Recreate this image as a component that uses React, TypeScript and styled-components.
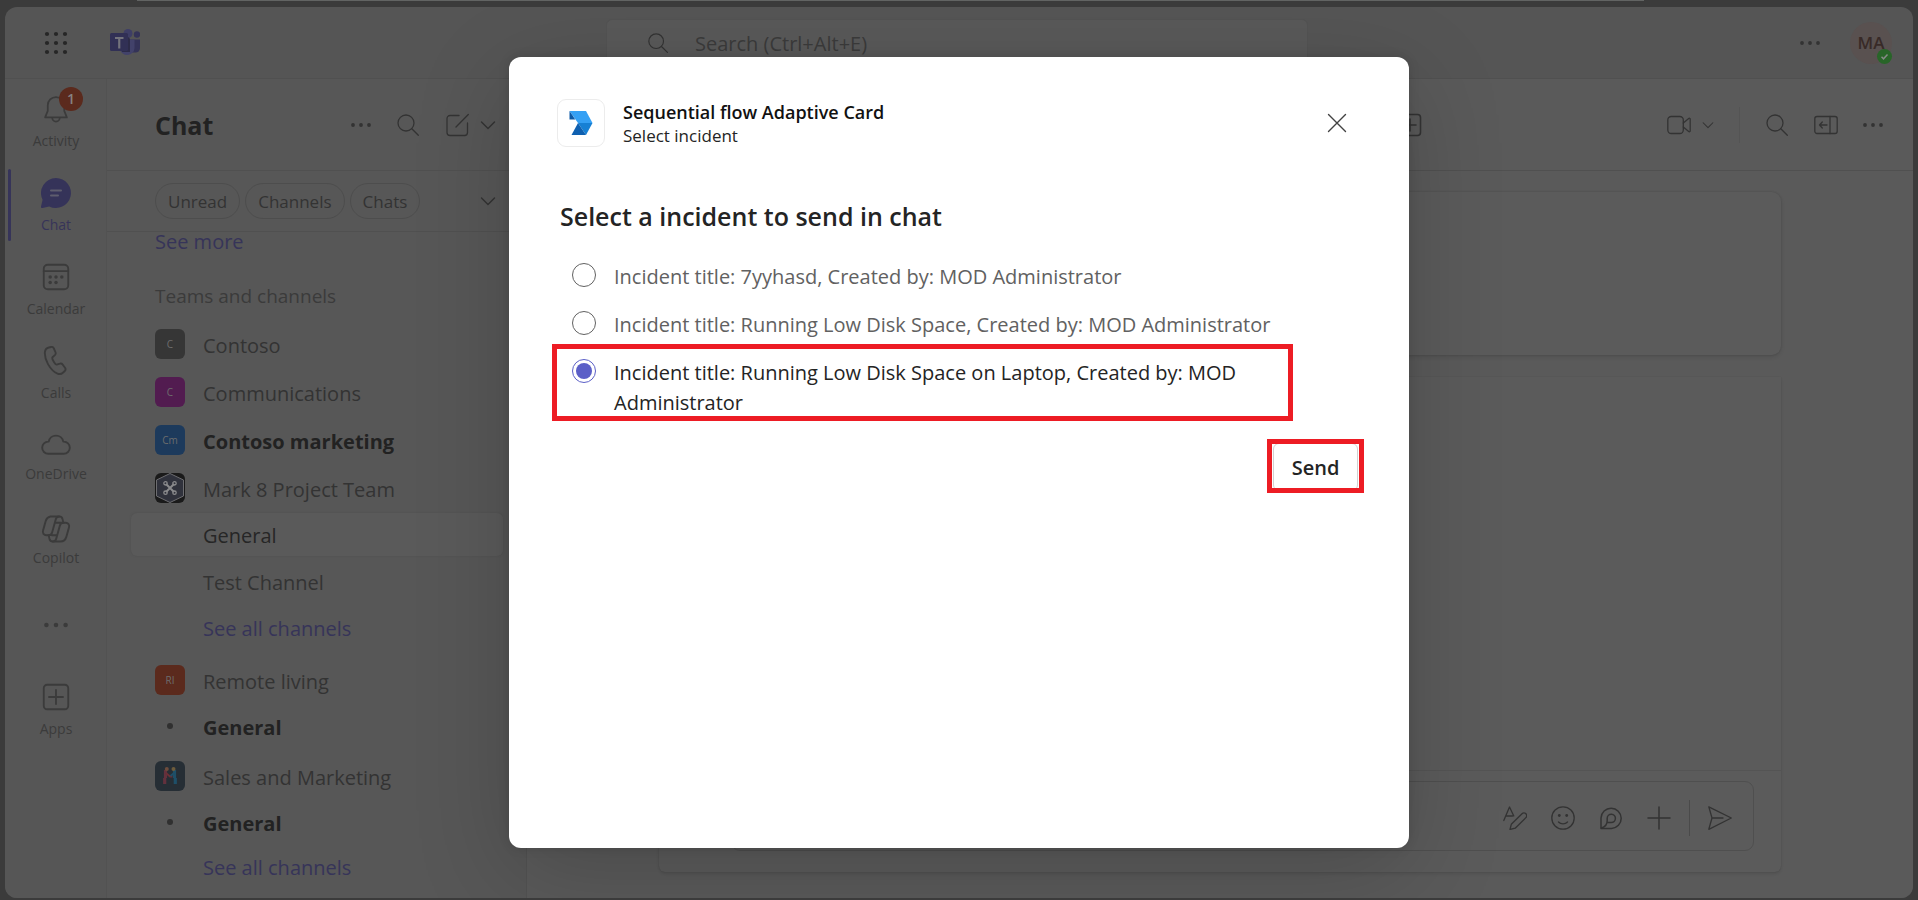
import React, { useState } from "react";
import styled, { createGlobalStyle, css } from "styled-components";

const c = {
  frame: "#3b3b3b",
  header: "#555555",
  rail: "#565656",
  list: "#575757",
  surface: "#5a5a5a",
  line: "#505050",
  faintLine: "#525252",
  strong: "#222222",
  text: "#333333",
  muted: "#3b3b3b",
  brand: "#363459",
};

const GlobalStyle = createGlobalStyle`
  * { box-sizing: border-box; }
  body {
    margin: 0;
    background: ${c.frame};
    font-family: "Open Sans", "Noto Sans", sans-serif;
    color: ${c.text};
  }
  button {
    font: inherit;
    color: inherit;
    background: none;
    border: 0;
    padding: 0;
    cursor: pointer;
  }
  a { text-decoration: none; }
  svg { display: block; }
`;

const Page = styled.div`
  height: 100vh;
  min-height: 880px;
  display: flex;
  flex-direction: column;
  padding: 0 5px 2px;
`;

const TitleStrip = styled.div`
  flex: none;
  height: 1px;
  width: 79%;
  margin: 0 0 6px 132px;
  background: #626463;
`;

const Window = styled.div`
  position: relative;
  flex: 1;
  min-height: 0;
  display: flex;
  flex-direction: column;
  border-radius: 12px;
  overflow: hidden;
  background: ${c.header};
`;

const Header = styled.header`
  flex: none;
  height: 72px;
  display: flex;
  align-items: center;
  border-bottom: 1px solid ${c.line};
`;

const HeaderSide = styled.div<{ $end?: boolean }>`
  flex: 1;
  display: flex;
  align-items: center;
  gap: 42px;
  padding: 0 21px 0 39px;
  ${(p) => p.$end && "justify-content: flex-end; gap: 30px;"}
`;

const SearchBox = styled.label`
  flex: 0 1 702px;
  height: 48px;
  display: flex;
  align-items: center;
  gap: 26px;
  margin-right: 4px;
  padding: 0 40px;
  border-radius: 6px;
  border: 1px solid #535353;
  background: #595959;
`;

const SearchInput = styled.input`
  flex: 1;
  min-width: 0;
  border: 0;
  padding: 2px 0 0;
  outline: 0;
  background: transparent;
  font: 20px/28px "Open Sans", "Noto Sans", sans-serif;
  color: ${c.text};
  &::placeholder { color: ${c.muted}; opacity: 1; }
`;

const Avatar = styled.button`
  position: relative;
  width: 42px;
  height: 42px;
  border-radius: 50%;
  background: #595150;
  color: #382a27;
  font-size: 17px;
  font-weight: 600;
`;

const Presence = styled.span`
  position: absolute;
  right: 0;
  bottom: 0;
  width: 15px;
  height: 15px;
  border-radius: 50%;
  background: #286528;
  display: grid;
  place-items: center;
`;

const Body = styled.div`
  flex: 1;
  min-height: 0;
  display: flex;
`;

const Rail = styled.nav`
  flex: none;
  width: 102px;
  padding-left: 1px;
  border-right: 1px solid ${c.faintLine};
  background: ${c.rail};
`;

const RailItem = styled.button<{ $active?: boolean; $tight?: boolean }>`
  position: relative;
  width: 100%;
  height: 84px;
  display: flex;
  flex-direction: column;
  align-items: center;
  gap: ${(p) => (p.$tight ? 4 : 7)}px;
  padding-top: 15px;
  font-size: 14px;
  line-height: 20px;
  color: ${(p) => (p.$active ? c.brand : c.muted)};
  ${(p) =>
    p.$active &&
    css`
      &::before {
        content: "";
        position: absolute;
        left: 2px;
        top: 6px;
        width: 3px;
        height: 72px;
        border-radius: 2px;
        background: ${c.brand};
      }
    `}
`;

const RailGlyph = styled.span`
  height: 30px;
  display: grid;
  place-items: center;
`;

const RailMore = styled(RailItem)`
  justify-content: center;
  padding-top: 0;
`;

const Count = styled.span`
  position: absolute;
  left: 53px;
  top: 8px;
  width: 24px;
  height: 24px;
  border-radius: 50%;
  background: #5b2a1d;
  color: #868281;
  font-weight: 600;
  line-height: 24px;
  text-align: center;
`;

const ListPane = styled.aside`
  flex: none;
  width: 420px;
  display: flex;
  flex-direction: column;
  border-right: 1px solid ${c.faintLine};
  background: ${c.list};
`;

const ListHeader = styled.div`
  flex: none;
  height: 92px;
  display: flex;
  align-items: center;
  padding: 0 30px 0 48px;
  border-bottom: 1px solid ${c.line};
`;

const ListTitle = styled.h1`
  flex: 1;
  margin: 0;
  font-size: 25px;
  line-height: 36px;
  color: ${c.strong};
`;

const ListActions = styled.div`
  display: flex;
  align-items: center;
  gap: 25px;
`;

const SplitButton = styled.div`
  display: flex;
  align-items: center;
  gap: 11px;
`;

const FilterBar = styled.div`
  flex: none;
  height: 61px;
  display: flex;
  align-items: center;
  gap: 5px;
  padding: 0 30px 0 48px;
  border-bottom: 1px solid ${c.line};
`;

const Pill = styled.button`
  height: 36px;
  padding: 2px 12px 0;
  border: 1px solid #4d4d4d;
  border-radius: 18px;
  font-size: 17px;
  line-height: 24px;
`;

const FilterToggle = styled.button`
  margin-left: auto;
`;

const List = styled.div`
  flex: 1;
  min-height: 0;
  margin-top: -4px;
  overflow: hidden;
  font-size: 20px;
`;

const SeeMore = styled.a`
  display: block;
  padding-left: 48px;
  line-height: 28px;
  color: ${c.brand};
`;

const SectionTitle = styled.h2`
  margin: 16px 0 0;
  padding-left: 48px;
  font-size: 19px;
  font-weight: 400;
  line-height: 48px;
  color: ${c.muted};
`;

const TeamGroup = styled.section<{ $gap?: number }>`
  padding-top: ${(p) => p.$gap ?? 0}px;
`;

const TeamRowButton = styled.button<{ $bold?: boolean }>`
  width: 100%;
  height: 48px;
  display: flex;
  align-items: center;
  gap: 18px;
  padding-left: 48px;
  font-weight: ${(p) => (p.$bold ? 700 : 400)};
  color: ${(p) => (p.$bold ? c.strong : c.text)};
`;

const TeamName = styled.span`
  padding-top: 3px;
`;

const TeamIcon = styled.span<{ $color: string }>`
  width: 30px;
  height: 30px;
  border-radius: 6px;
  overflow: hidden;
  background: ${(p) => p.$color};
  color: #6c6c6c;
  font-size: 10px;
  font-weight: 400;
  display: grid;
  place-items: center;
`;

const ChannelRow = styled.a<{ $selected?: boolean; $unread?: boolean; $more?: boolean; $tall?: boolean }>`
  height: ${(p) => (p.$tall ? 48 : 43)}px;
  margin: ${(p) => (p.$tall ? 0 : 1)}px 23px ${(p) => (p.$tall ? 0 : 1)}px 24px;
  display: flex;
  align-items: center;
  gap: 30px;
  padding: 2px 0 0 ${(p) => (p.$unread ? 36 : 72)}px;
  border-radius: 6px;
  color: ${c.text};
  ${(p) => p.$more && `color: ${c.brand};`}
  ${(p) => p.$unread && `color: ${c.strong}; font-weight: 700;`}
  ${(p) => p.$selected && "background: #5a5a5a; color: #262626; box-shadow: 0 0 2px #4e4e4e;"}
`;

const UnreadDot = styled.span`
  width: 6px;
  height: 6px;
  margin-bottom: 4px;
  border-radius: 50%;
  background: #303030;
`;

const Main = styled.main`
  flex: 1;
  min-width: 0;
  display: flex;
  flex-direction: column;
  background: ${c.surface};
`;

const MainHeader = styled.div`
  flex: none;
  height: 92px;
  display: flex;
  align-items: center;
  padding-right: 30px;
  border-bottom: 1px solid ${c.line};
`;

const TabArea = styled.div`
  flex: 0 0 66%;
  display: flex;
  justify-content: flex-end;
`;

const MainActions = styled.div`
  flex: 1;
  display: flex;
  align-items: center;
  justify-content: flex-end;
  gap: 25px;
`;

const Divider = styled.span<{ $dark?: boolean }>`
  width: 1px;
  height: 36px;
  background: ${(p) => (p.$dark ? "#4a4a4a" : "#545454")};
`;

const Feed = styled.div`
  flex: 1;
  min-height: 0;
  display: flex;
  flex-direction: column;
  gap: 22px;
  padding: 21px 132px 26px;
`;

const PostCard = styled.article`
  height: 163px;
  flex: none;
  border-radius: 9px;
  background: #5b5b5b;
  box-shadow: 0 2px 4px rgba(0, 0, 0, 0.1), 0 0 2px rgba(0, 0, 0, 0.14);
`;

const ThreadCard = styled.article`
  flex: 1;
  min-height: 0;
  display: flex;
  flex-direction: column;
  justify-content: flex-end;
  border-radius: 0 0 6px 6px;
  background: #5b5b5b;
  box-shadow: 0 2px 3px rgba(0, 0, 0, 0.1), 0 0 1px rgba(0, 0, 0, 0.14);
`;

const Composer = styled.div`
  padding: 10px 27px 21px 72px;
  border-top: 1px solid #545454;
`;

const ComposeBox = styled.div`
  height: 70px;
  display: flex;
  align-items: center;
  justify-content: flex-end;
  gap: 18px;
  padding: 3px 21px 0;
  border: 1px solid #4f4f4f;
  border-radius: 9px;
`;

const ComposeTools = styled.div`
  display: flex;
  gap: 24px;
`;

const Overlay = styled.div`
  position: absolute;
  inset: 0;
  display: flex;
  align-items: center;
  justify-content: center;
`;

const Modal = styled.section`
  width: 900px;
  height: 791px;
  max-width: 94%;
  padding: 41px 48px 48px;
  border-radius: 12px;
  background: #ffffff;
  color: #242424;
  box-shadow: 0 0 12px rgba(0, 0, 0, 0.12), 0 24px 96px rgba(0, 0, 0, 0.18);
`;

const ModalHeader = styled.header`
  display: flex;
  align-items: center;
  gap: 18px;
`;

const AppIcon = styled.span`
  width: 48px;
  height: 48px;
  border: 1px solid #ececec;
  border-radius: 9px;
  display: grid;
  place-items: center;
`;

const ModalTitles = styled.div`
  flex: 1;
  padding-top: 2px;
`;

const ModalTitle = styled.h2`
  margin: 0;
  font-size: 18px;
  font-weight: 600;
  line-height: 24px;
  color: #111111;
`;

const ModalSubtitle = styled.p`
  margin: 0;
  font-size: 17px;
  line-height: 24px;
  color: #242424;
`;

const CloseButton = styled.button`
  width: 48px;
  height: 48px;
  display: grid;
  place-items: center;
  color: #424242;
`;

const Form = styled.form`
  padding: 52px 3px 0;
  font-size: 20px;
`;

const Fieldset = styled.fieldset`
  min-width: 0;
  margin: 0 65px 0 0;
  padding: 0;
  border: 0;
`;

const Legend = styled.legend`
  padding: 0;
  font-size: 25px;
  font-weight: 600;
  line-height: 32px;
  margin-bottom: 29px;
`;

const Options = styled.div`
  display: flex;
  flex-direction: column;
  gap: 17px;
`;

const Option = styled.label`
  position: relative;
  display: flex;
  align-items: flex-start;
  gap: 18px;
  padding-left: 12px;
  line-height: 30px;
  color: #616161;
  &:has(input:checked) { color: #242424; }
`;

const OptionText = styled.span`
  padding-top: 1px;
`;

const Radio = styled.input`
  appearance: none;
  flex: none;
  width: 24px;
  height: 24px;
  margin: 2px 0 0;
  border: 1px solid #616161;
  border-radius: 50%;
  display: grid;
  place-items: center;
  &:checked { border-color: #5b5fc7; }
  &:checked::after {
    content: "";
    width: 16px;
    height: 16px;
    border-radius: 50%;
    background: #5b5fc7;
  }
`;

const Callout = styled.span<{ $inset: string }>`
  position: absolute;
  inset: ${(p) => p.$inset};
  border: 5px solid #ed1c24;
  pointer-events: none;
`;

const Actions = styled.div`
  display: flex;
  justify-content: flex-end;
  margin-top: 25px;
`;

const SendButton = styled.button`
  position: relative;
  width: 85px;
  height: 48px;
  border: 1px solid #d1d1d1;
  border-radius: 6px;
  font-size: 20px;
  font-weight: 600;
`;

type IconProps = { size?: number; stroke?: number; children: React.ReactNode };

function Icon({ size = 24, stroke = 1.3, children }: IconProps) {
  return (
    <svg
      width={size}
      height={size}
      viewBox="0 0 24 24"
      fill="none"
      stroke="currentColor"
      strokeWidth={stroke}
      strokeLinecap="round"
      strokeLinejoin="round"
      aria-hidden="true"
    >
      {children}
    </svg>
  );
}

const SearchIcon = ({ size = 24 }: { size?: number }) => (
  <Icon size={size}>
    <circle cx="10" cy="10" r="8" />
    <path d="M15.8 15.8 22.3 22.3" />
  </Icon>
);

const Dots = ({ size = 20, r = 1.9 }: { size?: number; r?: number }) => (
  <svg width={size} height={size} viewBox="0 0 20 20" fill="currentColor" aria-hidden="true">
    <circle cx="2" cy="10" r={r} />
    <circle cx="10" cy="10" r={r} />
    <circle cx="18" cy="10" r={r} />
  </svg>
);

const Chevron = ({ size = 16 }: { size?: number }) => (
  <svg
    width={size}
    height={size}
    viewBox="0 0 16 16"
    fill="none"
    stroke="currentColor"
    strokeWidth="1.4"
    strokeLinecap="round"
    strokeLinejoin="round"
    aria-hidden="true"
  >
    <path d="M1.5 5 8 11.5 14.5 5" />
  </svg>
);

const Waffle = () => (
  <svg width="24" height="24" viewBox="0 0 24 24" fill="#262626" aria-hidden="true">
    {[3, 12, 21].map((y) => [3, 12, 21].map((x) => <circle key={`${x}-${y}`} cx={x} cy={y} r="2.1" />))}
  </svg>
);

const TeamsLogo = () => (
  <svg width="30" height="28" viewBox="0 0 30 28" aria-hidden="true">
    <circle cx="27" cy="5.500" r="3.200" fill="#343358" />
    <path d="M20 10.500h10V19a4.500 4.500 0 0 1-4.500 4.500H20z" fill="#343358" />
    <circle cx="18" cy="4.500" r="4.500" fill="#3e3e66" />
    <path d="M10 10.500h14.500V19a7.300 7.300 0 0 1-14.500 1z" fill="#42426a" />
    <path d="M10 8h7a3 3 0 0 1 3 3v12h-8z" fill="#2c2b48" />
    <rect x="0" y="4" width="18" height="18" rx="1.500" fill="#313055" />
    <path d="M5 9h8.500M9.250 9v10.500" stroke="#73737c" strokeWidth="2.200" fill="none" />
  </svg>
);

const BellIcon = () => (
  <Icon size={30} stroke={1.4}>
    <path d="M12 2.400a6.600 6.600 0 0 0-6.600 6.600v4.500L3.300 18.700h17.400L18.600 13.500V9A6.600 6.600 0 0 0 12 2.400z" />
    <path d="M9 19a3 3 0 0 0 6 0" />
  </Icon>
);

const ChatIcon = () => (
  <svg width="30" height="30" viewBox="0 0 30 30" aria-hidden="true">
    <path d="M15 0a15 15 0 1 1-6.800 28.400L1.500 30A1.200 1.200 0 0 1 0 28.500l1.600-6.700A15 15 0 0 1 15 0z" fill="#353359" />
    <path d="M10 12.500h10M10 17.500h7" stroke="#5e5d6e" strokeWidth="2" strokeLinecap="round" />
  </svg>
);

const CalendarIcon = () => (
  <Icon size={28} stroke={1.6}>
    <rect x="1.500" y="1.500" width="21" height="21" rx="3.500" />
    <path d="M1.500 7h21" />
    <g fill="currentColor" stroke="none">
      <circle cx="7" cy="12" r="1.500" />
      <circle cx="12" cy="12" r="1.500" />
      <circle cx="17" cy="12" r="1.500" />
      <circle cx="7" cy="16.800" r="1.500" />
      <circle cx="12" cy="16.800" r="1.500" />
    </g>
  </Icon>
);

const PhoneIcon = () => (
  <Icon size={30} stroke={1.5}>
    <path d="M6.300 1.200 8 .8c1-.2 1.900.3 2.300 1.200l1.300 3c.3.800.1 1.700-.5 2.300L9.200 9c-.4.400-.1 1.700.9 3.400s1.900 2.600 2.500 2.500l2.500-.8c.8-.3 1.700 0 2.200.7l1.900 2.600c.6.800.5 1.900-.2 2.600l-1.300 1.200c-1.200 1.200-3 1.500-4.500.9C9.900 20.800 7.500 17.800 5.600 14.500S2.900 7.800 3.100 4.900c.2-1.900 1.500-3.300 3.200-3.700z" />
  </Icon>
);

const CloudIcon = () => (
  <Icon size={30} stroke={1.5}>
    <path d="M6.200 9.300a5.900 5.900 0 0 1 11.600 0h.4a4.800 4.800 0 0 1 0 9.700H5.800a4.800 4.800 0 0 1 0-9.700z" />
  </Icon>
);

const CopilotIcon = () => (
  <Icon size={30} stroke={1.5}>
    <path d="M7.500 2h7.300c1.100 0 2 .7 2.300 1.700l.8 3.300h1.800c2 0 3.300 1.800 2.700 3.700l-2.200 7.800A4.900 4.900 0 0 1 15.600 22H9.200c-1.100 0-2-.7-2.300-1.700L6.100 17H4.300c-2 0-3.300-1.800-2.700-3.700l2.200-7.800A4.900 4.900 0 0 1 7.500 2z" />
    <path d="M14.500 2c-1.500 0-2.300.9-2.700 2.300L8.900 14.800C8.500 16.300 7.600 17 6.100 17M9.500 22c1.500 0 2.300-.9 2.700-2.300l2.900-10.400C15.500 7.800 16.400 7 17.900 7h-6.800M8.700 17h4.200" />
  </Icon>
);

const AppsIcon = ({ size = 28 }: { size?: number }) => (
  <Icon size={size} stroke={1.6}>
    <rect x="1.500" y="1.500" width="21" height="21" rx="3" />
    <path d="M12 6v12M6 12h12" />
  </Icon>
);

const ComposeIcon = () => (
  <Icon>
    <path d="M14 2.500H5A3 3 0 0 0 2 5.500v14a3 3 0 0 0 3 3h14.500a3 3 0 0 0 3-3V10M11 14 23.300 1.500" />
  </Icon>
);

const VideoIcon = () => (
  <Icon>
    <rect x=".8" y="3.500" width="15.500" height="17" rx="3.500" />
    <path d="m16.300 10 5.400-4.600c.6-.5 1.500-.1 1.500.7v11.800c0 .8-.9 1.200-1.500.7L16.300 14" />
  </Icon>
);

const PanelIcon = () => (
  <Icon>
    <rect x=".8" y="3.500" width="22.400" height="17" rx="2.200" />
    <path d="M16 3.500v17M5.500 12h7.500M8.300 9 5.500 12l2.800 3" />
  </Icon>
);

const FormatIcon = () => (
  <Icon>
    <path d="M.8 14.500 6.500 1l4.300 9M3 10h6.500" />
    <path d="m7 23.500 1.300-5.200L19 7.700a2.700 2.700 0 0 1 3.900 3.900L12.200 22.200z" />
  </Icon>
);

const EmojiIcon = () => (
  <Icon>
    <circle cx="12" cy="12" r="11.200" />
    <path d="M7.500 16c2.300 2.500 6.700 2.500 9 0" />
    <circle cx="8.300" cy="9.500" r="1.400" fill="currentColor" stroke="none" />
    <circle cx="15.700" cy="9.500" r="1.400" fill="currentColor" stroke="none" />
  </Icon>
);

const LoopIcon = () => (
  <Icon stroke={1.5}>
    <path d="M2 22.500V12A10.100 10.100 0 1 1 12.500 22.500z" />
    <path d="M2.500 22c3.500-1 5.700-3.500 5.700-7.500v-2.300a4.100 4.100 0 1 1 4 4.300H8.500" />
  </Icon>
);

const PlusIcon = () => (
  <Icon stroke={1.5}>
    <path d="M12 1v22M1 12h22" />
  </Icon>
);

const SendIcon = () => (
  <Icon>
    <path d="M.8.8 23.300 12 .8 23.300 4 12zM4 12h11" />
  </Icon>
);

const CloseIcon = () => (
  <svg width="20" height="20" viewBox="0 0 20 20" fill="none" stroke="currentColor" strokeWidth="1.4" strokeLinecap="round">
    <path d="m1.500 1.500 17 17M18.500 1.500l-17 17" />
  </svg>
);

const FlowLogo = () => (
  <svg width="24" height="24" viewBox="0 0 24 24" aria-hidden="true">
    <path d="M.5 0H17l6.500 12H9z" fill="#35a0f4" />
    <path d="M.5 0v8.500h5.800z" fill="#0d5aa7" />
    <path d="M9 12h14.500L17 24z" fill="#1780d4" />
    <path d="M9 12 17 24H2.500z" fill="#0f60b0" />
  </svg>
);

const DroneTile = () => (
  <svg width="30" height="30" viewBox="0 0 30 30" fill="none" aria-hidden="true">
    <path d="M15 .5 28.500 7v16L15 29.500 1.500 23V7z" fill="#30323c" stroke="#6d6d70" />
    <g stroke="#8a8a8c" strokeWidth="1.300">
      <path d="m11 11 8 8M19 11l-8 8" strokeWidth="2" />
      <circle cx="10.500" cy="10.300" r="1.700" />
      <circle cx="19.500" cy="10.300" r="1.700" />
      <circle cx="10.500" cy="19.700" r="1.700" />
      <circle cx="19.500" cy="19.700" r="1.700" />
    </g>
  </svg>
);

const PeopleTile = () => (
  <svg width="30" height="30" viewBox="0 0 30 30" fill="none" aria-hidden="true">
    <path d="M10.500 9v8M9.700 17v6" stroke="#63313d" strokeWidth="3.200" />
    <path d="m11 12 4 3.500h2.500" stroke="#6b2f35" strokeWidth="1.800" />
    <path d="M19.500 9v8M20.300 17v6" stroke="#1e4f68" strokeWidth="3.200" />
    <path d="m19 12-3.500 3" stroke="#1e4f68" strokeWidth="1.800" />
    <circle cx="11.800" cy="8" r="2" fill="#6e4c3c" />
    <circle cx="18.500" cy="8" r="2" fill="#6e5c3c" />
  </svg>
);

const railItems = [
  { label: "Activity", icon: <BellIcon />, count: 1 },
  { label: "Chat", icon: <ChatIcon />, active: true },
  { label: "Calendar", icon: <CalendarIcon /> },
  { label: "Calls", icon: <PhoneIcon /> },
  { label: "OneDrive", icon: <CloudIcon />, tight: true },
  { label: "Copilot", icon: <CopilotIcon />, tight: true },
];

const incidents = [
  "Incident title: 7yyhasd, Created by: MOD Administrator",
  "Incident title: Running Low Disk Space, Created by: MOD Administrator",
  "Incident title: Running Low Disk Space on Laptop, Created by: MOD Administrator",
];

type TeamProps = { name: string; color: string; bold?: boolean; children: React.ReactNode };

function Team({ name, color, bold, children }: TeamProps) {
  return (
    <TeamRowButton $bold={bold}>
      <TeamIcon $color={color}>{children}</TeamIcon>
      <TeamName>{name}</TeamName>
    </TeamRowButton>
  );
}

function Unread({ children }: { children: React.ReactNode }) {
  return (
    <ChannelRow href="#" $unread>
      <UnreadDot />
      {children}
    </ChannelRow>
  );
}

function ChatList() {
  return (
    <ListPane>
      <ListHeader>
        <ListTitle>Chat</ListTitle>
        <ListActions>
          <button aria-label="More options"><Dots /></button>
          <button aria-label="Search chats"><SearchIcon /></button>
          <SplitButton>
            <button aria-label="New message"><ComposeIcon /></button>
            <button aria-label="New message options"><Chevron /></button>
          </SplitButton>
        </ListActions>
      </ListHeader>
      <FilterBar>
        <Pill>Unread</Pill>
        <Pill>Channels</Pill>
        <Pill>Chats</Pill>
        <FilterToggle aria-label="More filters"><Chevron /></FilterToggle>
      </FilterBar>
      <List>
        <SeeMore href="#">See more</SeeMore>
        <SectionTitle>Teams and channels</SectionTitle>
        <Team name="Contoso" color="#363636">C</Team>
        <Team name="Communications" color="#521c50">C</Team>
        <Team name="Contoso marketing" color="#1d3a5c" bold>Cm</Team>
        <TeamGroup>
          <Team name="Mark 8 Project Team" color="#1a1a1a"><DroneTile /></Team>
          <ChannelRow href="#" $selected>General</ChannelRow>
          <ChannelRow href="#" $tall>Test Channel</ChannelRow>
          <ChannelRow href="#" $more>See all channels</ChannelRow>
        </TeamGroup>
        <TeamGroup $gap={6}>
          <Team name="Remote living" color="#5b2a1d">RI</Team>
          <Unread>General</Unread>
        </TeamGroup>
        <TeamGroup $gap={3}>
          <Team name="Sales and Marketing" color="#262e35"><PeopleTile /></Team>
          <Unread>General</Unread>
          <ChannelRow href="#" $more>See all channels</ChannelRow>
        </TeamGroup>
      </List>
    </ListPane>
  );
}

function Conversation() {
  return (
    <Main>
      <MainHeader>
        <TabArea>
          <button aria-label="Add a tab"><AppsIcon size={24} /></button>
        </TabArea>
        <MainActions>
          <SplitButton>
            <button aria-label="Meet now"><VideoIcon /></button>
            <button aria-label="Meeting options"><Chevron size={12} /></button>
          </SplitButton>
          <Divider />
          <button aria-label="Search in channel"><SearchIcon /></button>
          <button aria-label="Open panel"><PanelIcon /></button>
          <button aria-label="More"><Dots /></button>
        </MainActions>
      </MainHeader>
      <Feed>
        <PostCard />
        <ThreadCard>
          <Composer>
            <ComposeBox>
              <ComposeTools>
                <button aria-label="Format"><FormatIcon /></button>
                <button aria-label="Emoji"><EmojiIcon /></button>
                <button aria-label="Loop components"><LoopIcon /></button>
                <button aria-label="Actions and apps"><PlusIcon /></button>
              </ComposeTools>
              <Divider $dark />
              <button aria-label="Send message"><SendIcon /></button>
            </ComposeBox>
          </Composer>
        </ThreadCard>
      </Feed>
    </Main>
  );
}

function IncidentDialog() {
  const [selected, setSelected] = useState(2);
  return (
    <Overlay>
      <Modal role="dialog" aria-labelledby="dialog-title">
        <ModalHeader>
          <AppIcon><FlowLogo /></AppIcon>
          <ModalTitles>
            <ModalTitle id="dialog-title">Sequential flow Adaptive Card</ModalTitle>
            <ModalSubtitle>Select incident</ModalSubtitle>
          </ModalTitles>
          <CloseButton aria-label="Close"><CloseIcon /></CloseButton>
        </ModalHeader>
        <Form onSubmit={(e) => e.preventDefault()}>
          <Fieldset>
            <Legend>Select a incident to send in chat</Legend>
            <Options>
              {incidents.map((title, i) => (
                <Option key={title}>
                  <Radio type="radio" name="incident" checked={selected === i} onChange={() => setSelected(i)} />
                  <OptionText>{title}</OptionText>
                  {i === 2 && <Callout $inset="-13px 0 -3px -8px" />}
                </Option>
              ))}
            </Options>
          </Fieldset>
          <Actions>
            <SendButton type="submit">
              Send
              <Callout $inset="-5px -7px -3px -7px" />
            </SendButton>
          </Actions>
        </Form>
      </Modal>
    </Overlay>
  );
}

export default function App() {
  return (
    <>
      <GlobalStyle />
      <Page>
        <TitleStrip />
        <Window>
          <Header>
            <HeaderSide>
              <button aria-label="App launcher"><Waffle /></button>
              <TeamsLogo />
            </HeaderSide>
            <SearchBox>
              <SearchIcon size={22} />
              <SearchInput type="search" placeholder="Search (Ctrl+Alt+E)" aria-label="Search" />
            </SearchBox>
            <HeaderSide $end>
              <button aria-label="Settings and more"><Dots /></button>
              <Avatar aria-label="MOD Administrator">
                MA
                <Presence>
                  <svg width="9" height="9" viewBox="0 0 9 9" fill="none" stroke="#868a86" strokeWidth="1.5">
                    <path d="m1.500 4.800 2 2 4-4.300" />
                  </svg>
                </Presence>
              </Avatar>
            </HeaderSide>
          </Header>
          <Body>
            <Rail>
              {railItems.map((item) => (
                <RailItem key={item.label} $active={item.active} $tight={item.tight}>
                  <RailGlyph>{item.icon}</RailGlyph>
                  {item.label}
                  {item.count && <Count>{item.count}</Count>}
                </RailItem>
              ))}
              <RailMore aria-label="View more apps"><Dots size={24} /></RailMore>
              <RailItem>
                <RailGlyph><AppsIcon /></RailGlyph>
                Apps
              </RailItem>
            </Rail>
            <ChatList />
            <Conversation />
          </Body>
          <IncidentDialog />
        </Window>
      </Page>
    </>
  );
}
